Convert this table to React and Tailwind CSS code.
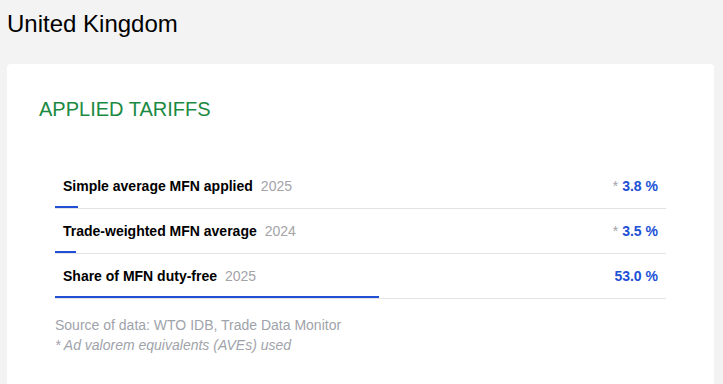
import React from 'react'

const ROWS = [
  { label: 'Simple average MFN applied', year: '2025', value: 3.8, ave: true },
  { label: 'Trade-weighted MFN average', year: '2024', value: 3.5, ave: true },
  { label: 'Share of MFN duty-free', year: '2025', value: 53.0, ave: false },
]

function TariffRow({ row }) {
  return (
    <div className="border-b border-[#e3e3e3] pt-[12px]">
      <div className="flex items-center justify-between px-2 pb-[10px] leading-[20px] text-[14px]">
        <div>
          <span className="font-bold text-black">{row.label}</span>
          <span className="ml-2 text-[#a3a3a8]">{row.year}</span>
        </div>
        <div>
          {row.ave && <span className="mr-1 text-[#a3a3a8]">*</span>}
          <span className="font-bold text-[#2150d6]">{row.value.toFixed(1)} %</span>
        </div>
      </div>
      {/* progress indicator */}
      <div className="h-[2px] bg-[#2150d6]" style={{ width: `${row.value}%` }} />
    </div>
  )
}

export default function App() {
  return (
    <div className="min-h-screen bg-[#f3f3f3] pl-[7px] pr-[9px] font-['Liberation_Sans',Arial,sans-serif]">
      {/* Header */}
      <h1 className="pt-[10px] text-[24px] leading-[28px] text-black">United Kingdom</h1>

      {/* Card */}
      <section className="mt-[26px] rounded-[4px] bg-white px-8 pt-[33px] pb-10">
        <h2 className="text-[20px] leading-[24px] text-[#1b8a41]">APPLIED TARIFFS</h2>

        <div className="mx-4 mt-[43px]">
          {ROWS.map(row => (
            <TariffRow key={row.label} row={row} />
          ))}
        </div>

        <div className="mx-4 mt-4 text-[14px] leading-[20px] text-[#a0a3aa]">
          <p>Source of data: WTO IDB, Trade Data Monitor</p>
          <p className="italic">* Ad valorem equivalents (AVEs) used</p>
        </div>
      </section>
    </div>
  )
}
